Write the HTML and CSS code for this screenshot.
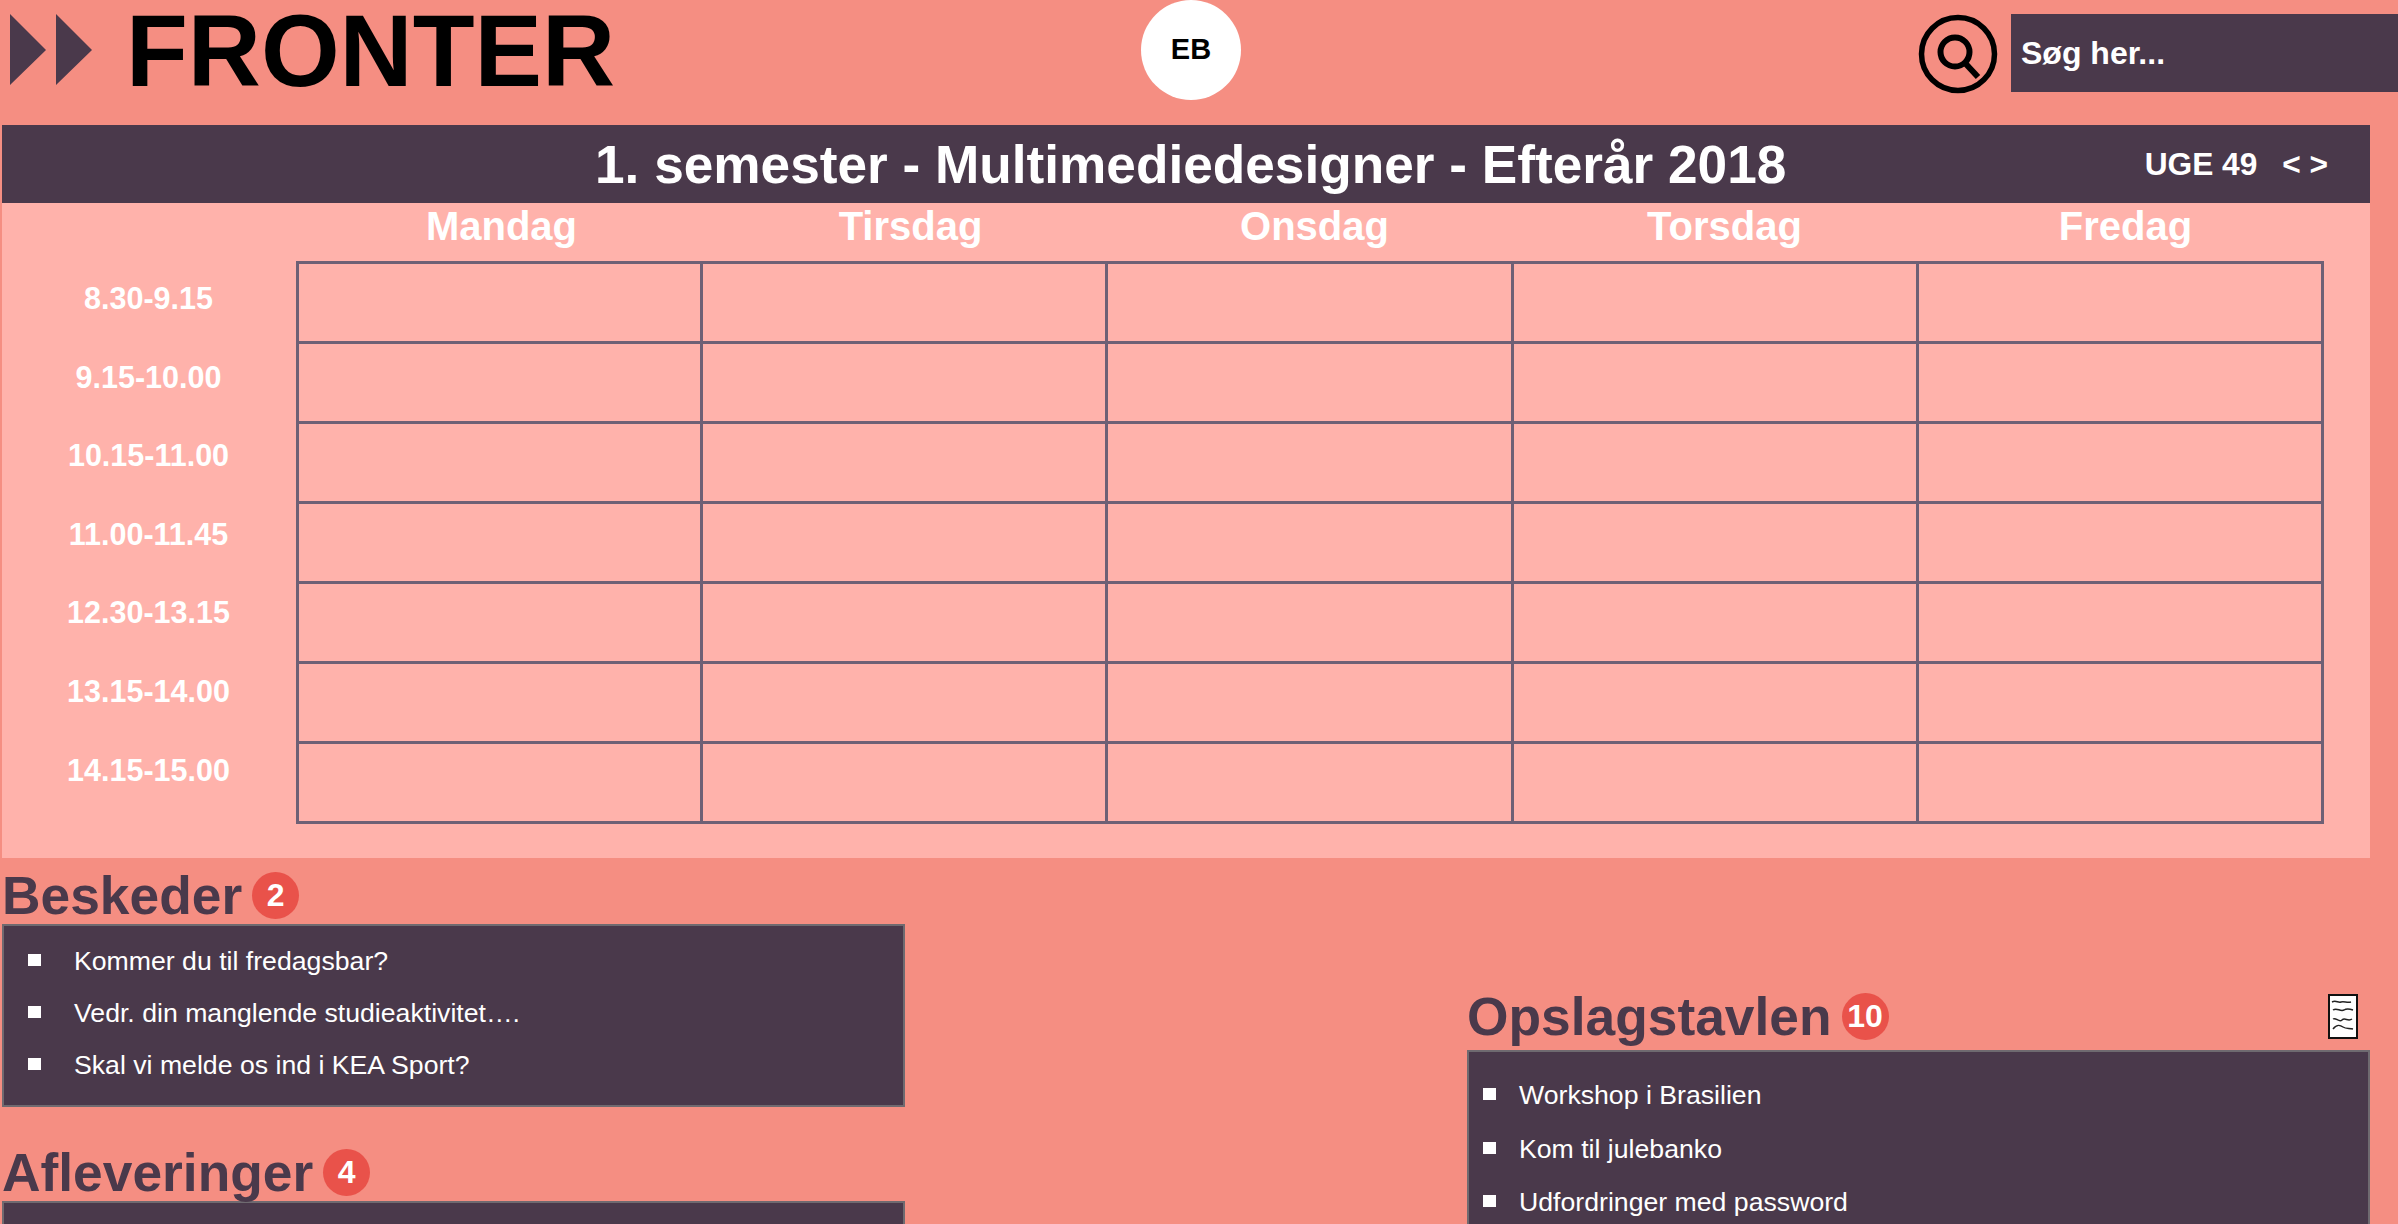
FILE: index.html
```html
<!DOCTYPE html>
<html lang="da">
<head>
    <meta charset="UTF-8">
    <title>Fronter</title>
    <link rel="stylesheet" href="styles.css">
</head>
<body>
    <header class="topbar">
        <div class="logo">
            <svg class="logo-arrows" width="82" height="71" viewBox="0 0 82 71">
                <path d="M0 0 L36 36 L0 71 Z M46 0 L82 36 L46 71 Z" fill="#4a394b"/>
            </svg>
            <span class="logo-text">FRONTER</span>
        </div>
        <div class="avatar">EB</div>
        <div class="search">
            <svg class="search-icon" width="80" height="80" viewBox="0 0 80 80">
                <circle cx="40" cy="40" r="36.5" fill="none" stroke="#000" stroke-width="5.5"/>
                <circle cx="37" cy="38" r="14.5" fill="none" stroke="#000" stroke-width="6"/>
                <path d="M47 49 L60 63" fill="none" stroke="#000" stroke-width="6"/>
            </svg>
            <div class="search-box">Søg her...</div>
        </div>
    </header>

    <main class="page">
        <div class="title-bar">
            <h1>1. semester - Multimediedesigner - Efterår 2018</h1>
            <div class="week">UGE 49 <span class="week-nav">&lt; &gt;</span></div>
        </div>

        <section class="schedule">
            <div class="days">
                <div>Mandag</div>
                <div>Tirsdag</div>
                <div>Onsdag</div>
                <div>Torsdag</div>
                <div>Fredag</div>
            </div>
            <div class="schedule-body">
                <div class="times">
                    <div>8.30-9.15</div>
                    <div>9.15-10.00</div>
                    <div>10.15-11.00</div>
                    <div>11.00-11.45</div>
                    <div>12.30-13.15</div>
                    <div>13.15-14.00</div>
                    <div>14.15-15.00</div>
                </div>
                <table class="slots">
                    <tr><td></td><td></td><td></td><td></td><td></td></tr>
                    <tr><td></td><td></td><td></td><td></td><td></td></tr>
                    <tr><td></td><td></td><td></td><td></td><td></td></tr>
                    <tr><td></td><td></td><td></td><td></td><td></td></tr>
                    <tr><td></td><td></td><td></td><td></td><td></td></tr>
                    <tr><td></td><td></td><td></td><td></td><td></td></tr>
                    <tr><td></td><td></td><td></td><td></td><td></td></tr>
                </table>
            </div>
        </section>

        <div class="lower">
            <div class="col-left">
                <section class="messages">
                    <div class="section-head">
                        <h2>Beskeder</h2>
                        <span class="badge">2</span>
                    </div>
                    <ul class="box">
                        <li>Kommer du til fredagsbar?</li>
                        <li>Vedr. din manglende studieaktivitet….</li>
                        <li>Skal vi melde os ind i KEA Sport?</li>
                    </ul>
                </section>
                <section class="handins">
                    <div class="section-head">
                        <h2>Afleveringer</h2>
                        <span class="badge">4</span>
                    </div>
                    <ul class="box"></ul>
                </section>
            </div>
            <section class="col-right">
                <div class="section-head">
                    <h2>Opslagstavlen</h2>
                    <span class="badge">10</span>
                    <svg class="doc-icon" width="30" height="45" viewBox="0 0 30 45">
                        <rect x="1" y="1" width="28" height="43" fill="#fff" stroke="#111" stroke-width="2"/>
                        <path d="M4 8 C8 6 10 9 13 8 C16 7 19 9 23 8 M5 16 C9 13 12 18 16 16 C19 14 22 15 25 16 M5 25 C8 23 11 29 14 26 C17 23 20 28 24 25 M5 35 C9 30 12 31 15 33 C18 35 21 34 25 35" fill="none" stroke="#222" stroke-width="1.5"/>
                    </svg>
                </div>
                <ul class="box">
                    <li>Workshop i Brasilien</li>
                    <li>Kom til julebanko</li>
                    <li>Udfordringer med password</li>
                </ul>
            </section>
        </div>
    </main>
</body>
</html>
```

FILE: styles.css
```css
* {
    box-sizing: border-box;
}
html, body {
    margin: 0;
    padding: 0;
    height: 1224px;
    overflow: hidden;
    background-color: #f58e82;
    font-family: "Liberation Sans", Arial, sans-serif;
}
.topbar {
    display: flex;
    height: 125px;
}
.logo {
    display: flex;
    width: 1141px;
    padding-left: 10px;
}
.logo-arrows {
    margin-top: 14px;
}
.logo-text {
    margin-left: 34px;
    font-size: 101.2px;
    font-weight: bold;
    line-height: 102px;
    color: #000;
}
.avatar {
    width: 100px;
    height: 100px;
    border-radius: 50%;
    background-color: #fff;
    color: #000;
    font-size: 29px;
    font-weight: bold;
    line-height: 98px;
    text-align: center;
}
.search {
    display: flex;
    margin-left: auto;
    padding-top: 14px;
}
.search-icon {
    margin-right: 13px;
}
.search-box {
    width: 387px;
    height: 78px;
    padding-left: 10px;
    background-color: #4a394b;
    color: #fff;
    font-size: 32px;
    font-weight: bold;
    line-height: 78px;
}
.page {
    padding: 0 28px 0 2px;
}
.title-bar {
    display: flex;
    align-items: center;
    height: 78px;
    padding: 0 42px 0 593px;
    background-color: #4a394b;
    color: #fff;
}
.title-bar h1 {
    margin: 0;
    font-size: 53.2px;
    font-weight: bold;
}
.week {
    margin-left: auto;
    font-size: 31.7px;
    font-weight: bold;
}
.week-nav {
    margin-left: 16px;
}
.schedule {
    height: 655px;
    background-color: #ffb2ab;
    color: #fff;
    font-weight: bold;
}
.days {
    display: grid;
    grid-template-columns: 405px 413px 395px 425px 377px;
    height: 58px;
    padding-left: 297px;
    font-size: 40px;
    line-height: 46px;
    text-align: center;
}
.schedule-body {
    display: flex;
}
.times {
    width: 294px;
    margin-top: -2px;
    padding-right: 1px;
    font-size: 30.5px;
    text-align: center;
}
.times div {
    height: 78.6px;
    line-height: 78.6px;
}
.slots {
    width: 2028px;
    table-layout: fixed;
    border-collapse: collapse;
    border: 3px solid #6e6075;
}
.slots td {
    height: 80px;
    border: 3px solid #6e6075;
}
.slots td:first-child {
    width: 404px;
}
.lower {
    display: flex;
    justify-content: space-between;
}
.col-left {
    width: 903px;
}
.col-right {
    width: 903px;
    margin-top: 126px;
}
.section-head {
    display: flex;
    align-items: center;
    height: 66px;
    padding-top: 8px;
}
.col-right .section-head {
    padding-top: 0;
    padding-bottom: 2px;
}
.section-head h2 {
    margin: 0;
    font-size: 53.33px;
    font-weight: bold;
    color: #4a394b;
}
.badge {
    width: 47px;
    height: 47px;
    margin-left: 10px;
    border-radius: 50%;
    background-color: #e9524a;
    color: #fff;
    font-size: 32px;
    font-weight: bold;
    line-height: 47px;
    text-align: center;
}
.doc-icon {
    margin-left: auto;
    margin-right: 12px;
}
.box {
    height: 183px;
    margin: 0;
    padding: 9px 0 0 70px;
    list-style: none;
    background-color: #4a394b;
    border: 2px solid #6f6a70;
    color: #fff;
    font-size: 26.67px;
}
.box li {
    position: relative;
    height: 52px;
    line-height: 52px;
}
.box li::before {
    content: "";
    position: absolute;
    left: -46px;
    top: 19px;
    width: 13px;
    height: 12px;
    background-color: #fff;
}
.messages {
    padding-bottom: 28px;
}
.handins .box {
    height: 300px;
}
.col-right .box {
    height: 300px;
    padding-top: 17px;
    padding-left: 50px;
}
.col-right .box li {
    height: 53.5px;
    line-height: 53.5px;
}
.col-right .box li::before {
    left: -36px;
}
```
